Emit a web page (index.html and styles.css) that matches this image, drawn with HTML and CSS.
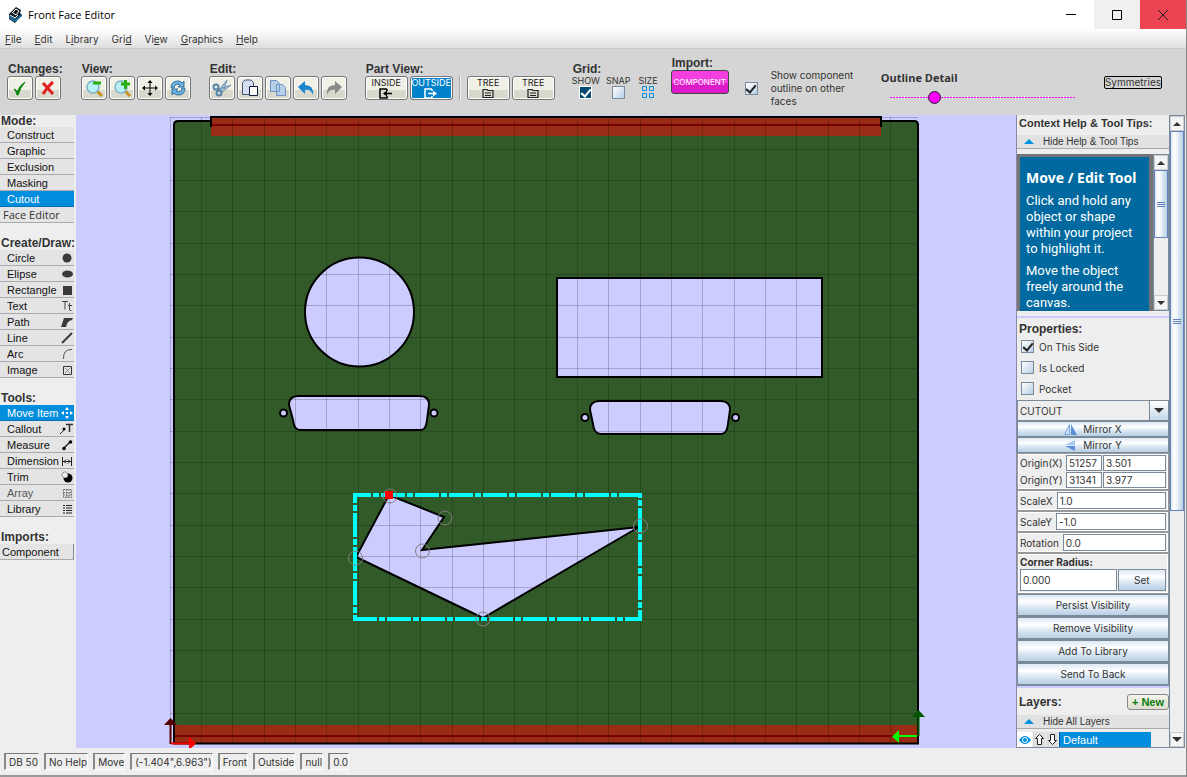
FILE: index.html
```html
<!DOCTYPE html>
<html lang="en">
<head>
<meta charset="utf-8">
<title>Front Face Editor</title>
<link rel="stylesheet" href="styles.css">
</head>
<body>
<div class="window">
<header class="titlebar">
  <svg class="app-logo" width="15" height="16" viewBox="0 0 15 16"><path d="M1 7 8 0l5 3-1 3 2 2-7 8-6-4z" fill="#101820"/><path d="M4 6l4-4 3 2-3 4" fill="none" stroke="#fff"/><path d="M1 8l6 4 7-5v2l-7 6-6-4z" fill="#1b6d9c"/><path d="M2 8l5 3 3-3M5 6l3 2" fill="none" stroke="#fff"/></svg>
  <h1 class="title">Front Face Editor</h1>
  <div class="window-controls">
    <button class="wc" aria-label="Minimize"><svg width="10" height="10"><path d="M0 4.500h10" stroke="#000"/></svg></button>
    <button class="wc wc-max" aria-label="Maximize"><svg width="10" height="10"><path d="M.5.5h9v9h-9z" stroke="#000" fill="none"/></svg></button>
    <button class="wc wc-close" aria-label="Close"><svg width="10" height="10"><path d="M0 0l10 10M10 0L0 10" stroke="#222"/></svg></button>
  </div>
</header>
<nav class="menubar">
  <a href="#"><u>F</u>ile</a><a href="#"><u>E</u>dit</a><a href="#">L<u>i</u>brary</a><a href="#">Gri<u>d</u></a><a href="#">Vi<u>e</u>w</a><a href="#"><u>G</u>raphics</a><a href="#"><u>H</u>elp</a>
</nav>
<div class="toolbar">
  <section class="group g-changes"><h2>Changes:</h2><div class="btns">
    <button class="tb" aria-label="Accept"><svg width="16" height="16" viewBox="0 0 16 16"><path d="M2 9q2 0 3 3Q8 5 13 2 8 8 6 15H5Q4 11 2 9z" fill="#0c840c" stroke="#0c840c"/></svg></button>
    <button class="tb" aria-label="Reject"><svg width="16" height="16" viewBox="0 0 16 16"><path d="M3 3l10 11M13 2Q7 7 3 14" stroke="#e02020" stroke-width="3" fill="none"/></svg></button>
  </div></section>
  <section class="group g-view"><h2>View:</h2><div class="btns">
    <button class="tb" aria-label="Zoom out"><svg width="20" height="20" viewBox="0 0 20 20"><path d="M13 13l5 5" stroke="#c89020" stroke-width="3"/><circle cx="9" cy="9" r="6" fill="#b8f0f4" stroke="#7db4c8" stroke-width="1.500"/><path d="M9 5h8" stroke="#29b010" stroke-width="3"/></svg></button>
    <button class="tb" aria-label="Zoom in"><svg width="20" height="20" viewBox="0 0 20 20"><path d="M13 13l5 5" stroke="#c89020" stroke-width="3"/><circle cx="9" cy="9" r="6" fill="#b8f0f4" stroke="#7db4c8" stroke-width="1.500"/><path d="M9 6h9M13.500 2v9" stroke="#29b010" stroke-width="3"/></svg></button>
    <button class="tb" aria-label="Pan"><svg width="16" height="16" viewBox="0 0 16 16"><path d="M8 2v12M2 8h12" stroke="#000"/><path d="M8 0l2.500 3h-5zM8 16l2.500-3h-5zM0 8l3-2.500v5zM16 8l-3-2.500v5z"/></svg></button>
    <button class="tb" aria-label="Refresh"><svg width="18" height="18" viewBox="0 0 18 18"><path d="M2 9Q2 2 9 2q3 0 4 2l2-2v6H9l2-2Q8 4 6 6L5 9zM16 9q0 7-7 7-3 0-4-2l-2 2v-6h6l-2 2q3 2 5 0l1-3z" fill="#6bb4e4" stroke="#35709c"/></svg></button>
  </div></section>
  <section class="group g-edit"><h2>Edit:</h2><div class="btns">
    <button class="tb" aria-label="Cut"><svg width="20" height="18" viewBox="0 0 20 18"><path d="M7 11L15 1l-3 9M7 10l12-4-9 7" fill="#9fc0d8" stroke="#6d93b0"/><circle cx="4" cy="8" r="2.500" fill="none" stroke="#5484a8" stroke-width="2"/><circle cx="7" cy="14" r="2.500" fill="none" stroke="#5484a8" stroke-width="2"/></svg></button>
    <button class="tb" aria-label="Paste"><svg width="18" height="18" viewBox="0 0 18 18"><path d="M1.500 3.500L4 1h6l2.500 2.500v12h-11z" fill="#d4def0" stroke="#4a5878"/><path d="M8.500 7.500h8v9h-8z" fill="#fff" stroke="#102040" stroke-width="1"/></svg></button>
    <button class="tb" aria-label="Copy"><svg width="18" height="18" viewBox="0 0 18 18"><path d="M1.500 1.500h6l3 3v8h-9zM7.500 5.500h6l3 3v8h-9z" fill="#b8cfea" stroke="#6f93c4"/></svg></button>
    <button class="tb" aria-label="Undo"><svg width="18" height="14" viewBox="0 0 18 14"><path d="M1 6l7-6v4q9 0 8 10-2-6-8-5v4z" fill="#1a86d0"/></svg></button>
    <button class="tb" aria-label="Redo"><svg width="18" height="14" viewBox="0 0 18 14"><path d="M17 6l-7-6v4q-9 0-8 10 2-6 8-5v4z" fill="#8a8a8a"/></svg></button>
  </div></section>
  <section class="group g-part"><h2>Part View:</h2><div class="btns">
    <button class="tb wide">INSIDE<svg width="14" height="11" viewBox="0 0 14 11"><path d="M8 1H1v9h7V8M8 1v2M13 5.500H5" fill="none" stroke="#000" stroke-width="1.500"/><path d="M4 5.500l4-3v6z"/></svg></button>
    <button class="tb wide on">OUTSIDE<svg width="14" height="11" viewBox="0 0 14 11"><path d="M8 1H1v9h7V8M8 1v2M4 5.500h7" fill="none" stroke="#fff" stroke-width="1.500"/><path d="M13 5.500l-4-3v6z" fill="#fff"/></svg></button>
    <span class="sep"></span>
    <button class="tb wide">TREE<svg width="12" height="11" viewBox="0 0 12 11"><path d="M1 9.500v-8h4l1 1h5v7zM3 5h6M3 7.500h6" fill="none" stroke="#222" stroke-width="1.200"/></svg></button>
    <button class="tb wide">TREE<svg width="12" height="11" viewBox="0 0 12 11"><path d="M1 9.500v-8h4l1 1h5v7zM3 5h6M3 7.500h6" fill="none" stroke="#222" stroke-width="1.200"/></svg></button>
  </div></section>
  <section class="group g-grid"><h2>Grid:</h2><div class="grid-opts">
    <label>SHOW<input type="checkbox" class="check dark" checked></label>
    <label>SNAP<input type="checkbox" class="check"></label>
    <button class="size">SIZE<svg width="12" height="12"><path d="M.5.5h4v4h-4zM7.500.5h4v4h-4zM.5 7.500h4v4h-4zM7.500 7.500h4v4h-4z" fill="none" stroke="#0090e0"/></svg></button>
  </div></section>
  <section class="group g-import"><h2>Import:</h2><button class="component">COMPONENT</button></section>
  <label class="outline-opt"><input type="checkbox" class="check" checked><span>Show component outline on other faces</span></label>
  <label class="detail"><span>Outline Detail</span><input type="range" min="0" max="100" value="22"></label>
  <button class="symm">Symmetries</button>
</div>
<main class="main">
<aside class="side">
  <section><h2>Mode:</h2>
    <button class="row">Construct</button><button class="row">Graphic</button><button class="row">Exclusion</button><button class="row">Masking</button><button class="row on">Cutout</button><button class="row plain">Face Editor</button></section>
  <section><h2>Create/Draw:</h2>
    <button class="row">Circle<svg width="12" height="12"><circle cx="6" cy="6" r="4.500" fill="#3a3a3a"/></svg></button>
    <button class="row">Elipse<svg width="12" height="12"><ellipse cx="6.500" cy="6" rx="5.500" ry="3.500" fill="#3a3a3a"/></svg></button>
    <button class="row">Rectangle<svg width="12" height="12"><path d="M2 2h9v9H2z" fill="#3a3a3a"/></svg></button>
    <button class="row">Text<svg width="12" height="12"><path d="M1 1.500h6M4 1.500v8M7 5.500h4M8.500 3v7q0 .5 2 .5" fill="none" stroke="#444"/></svg></button>
    <button class="row">Path<svg width="12" height="12"><path d="M0 11l3-9h9l-1 2Q6 5 5 11z" fill="#3a3a3a"/></svg></button>
    <button class="row">Line<svg width="12" height="12"><path d="M1 11L11 1" stroke="#3a3a3a" stroke-width="2"/></svg></button>
    <button class="row">Arc<svg width="12" height="12"><path d="M2.500 11Q2 1 11 1.500" fill="none" stroke="#555"/></svg></button>
    <button class="row">Image<svg width="12" height="12"><path d="M2.500 2.500h8v8h-8z" fill="none" stroke="#333"/><path d="M4 4l5 5M9 4L4 9" stroke="#888"/></svg></button></section>
  <section><h2>Tools:</h2>
    <button class="row on">Move Item<svg width="12" height="12"><path d="M6 0l2 3H4zM6 12l2-3H4zM0 6l3-2v4zM12 6L9 4v4zM5 5h2v2H5z" fill="#fff"/></svg></button>
    <button class="row">Callout<svg width="14" height="12"><path d="M1 11l5-5" stroke="#222"/><circle cx="5" cy="6" r="1.500"/><path d="M7 1.500h7M10.500 1v8" stroke="#333" stroke-width="1.500"/></svg></button>
    <button class="row">Measure<svg width="12" height="12"><path d="M3 9l6-6" stroke="#222" stroke-width="1.500"/><circle cx="3" cy="9.500" r="1.800"/><circle cx="9.500" cy="3" r="1.800"/></svg></button>
    <button class="row">Dimension<svg width="12" height="12"><path d="M1.500 2v9M10.500 2v9M2 6.500h8M5 4.500l-2 2 2 2M7 4.500l2 2-2 2" fill="none" stroke="#222"/></svg></button>
    <button class="row">Trim<svg width="12" height="12"><circle cx="7" cy="7" r="4.500"/><circle cx="4" cy="4" r="3" fill="#e8e8e8" stroke="#333" stroke-dasharray="1 1"/></svg></button>
    <button class="row dim">Array<svg width="12" height="12"><path d="M2.500 2.500h8v8h-8zM2 5.500h9M2 8h9M5.500 2v9M8 2v9" fill="none" stroke="#777" stroke-dasharray="2 1"/></svg></button>
    <button class="row">Library<svg width="12" height="12"><path d="M2 2.500h2M2 5h2M2 7.500h2M2 10h2M5 2.500h6M5 5h6M5 7.500h6M5 10h6" stroke="#222"/></svg></button></section>
  <section><h2>Imports:</h2><button class="row comp">Component</button></section>
</aside>
<div class="canvas">
<svg class="drawing" viewBox="76 115 940 633" preserveAspectRatio="xMinYMin meet" role="img" aria-label="Front face drawing">
  <path d="M174 744V125q0-4 4-4h33v-4h670v4h33q4 0 4 4v619z" fill="#315a28"/>
  <path d="M211 118h670v18H211zM174 725h744v18H174z" fill="#982c14"/>
  <path d="M211 125h670M174 736h744" stroke="#7a0000" stroke-width="2"/>
  <path d="M174 744V125q0-4 4-4h33M881 121h33q4 0 4 4v619" fill="none" stroke="#000" stroke-width="2"/>
  <path d="M173 743.500h746M210 117h672" stroke="#000" stroke-width="2"/>
  <path d="M211 117v10M881 117v10" stroke="#000" stroke-width="2"/>
  <g fill="#ccf" stroke="#000" stroke-width="2">
    <circle cx="359.500" cy="312" r="54.500"/>
    <path d="M557 278h265v99H557z"/>
    <path d="M298 396h122q9 0 9 9l-2 15q-1 10-6 10H300q-6 0-7-10l-4-15q0-9 9-9z"/>
    <path d="M599 401h122q9 0 9 9l-2 14q-1 10-7 10H601q-7 0-8-10l-3-14q0-9 9-9z"/>
    <circle cx="283.500" cy="413" r="3.500"/><circle cx="434" cy="413" r="3.500"/>
    <circle cx="585" cy="417.500" r="3.500"/><circle cx="735.500" cy="417.500" r="3.500"/>
    <path d="M389 495l55 22-22 33 217-23-156 91-127-61z"/>
  </g>
  <path stroke="#000" stroke-opacity=".2" fill="none" d="M170.500 117v627M201.500 117v627M232.500 117v627M264.500 117v627M295.500 117v627M326.500 117v627M358.500 117v627M389.500 117v627M420.500 117v627M452.500 117v627M483.500 117v627M514.500 117v627M546.500 117v627M577.500 117v627M608.500 117v627M640.500 117v627M671.500 117v627M702.500 117v627M734.500 117v627M765.500 117v627M796.500 117v627M828.500 117v627M859.500 117v627M890.500 117v627M170 117.500h748M170 149.500h748M170 180.500h748M170 211.500h748M170 243.500h748M170 274.500h748M170 305.500h748M170 337.500h748M170 368.500h748M170 399.500h748M170 431.500h748M170 462.500h748M170 493.500h748M170 525.500h748M170 556.500h748M170 587.500h748M170 619.500h748M170 650.500h748M170 681.500h748M170 713.500h748"/>
  <g stroke="#0ff" stroke-width="4" stroke-dasharray="24 2 6 2">
    <path d="M353 495h289" stroke-dashoffset="6"/><path d="M355 493v128" stroke-dashoffset="14"/>
    <path d="M640 493v128" stroke-dashoffset="19"/><path d="M353 619h289"/>
  </g>
  <g fill="none" stroke="#808080"><circle cx="390" cy="496" r="7"/><circle cx="445" cy="518" r="7"/><circle cx="422.500" cy="551" r="7"/><circle cx="640.500" cy="526" r="7"/><circle cx="483" cy="619" r="7"/><circle cx="355.500" cy="558" r="7"/></g>
  <path d="M385 491h8v8h-8z" fill="red"/>
  <path d="M170.500 744v-20" stroke="#500" stroke-width="2"/><path d="M164 725l6.500-7 6.500 7z" fill="#500"/>
  <path d="M171 743.500h19" stroke="red" stroke-width="2"/><path d="M189 737v13l7-6.500z" fill="red"/>
  <path d="M918.500 736v-20" stroke="#050" stroke-width="2"/><path d="M912 717l6.500-7 6.500 7z" fill="#050"/>
  <path d="M917 736h-19" stroke="#0f0" stroke-width="2"/><path d="M899 730v13l-7-6.500z" fill="#0f0"/>
</svg>
</div>
<aside class="panel">
<div class="content">
  <section class="help">
    <h2>Context Help &amp; Tool Tips:</h2>
    <button class="toggle"><svg width="10" height="5"><path d="M5 0l5 5H0z" fill="#0090e0"/></svg>Hide Help &amp; Tool Tips</button>
    <div class="help-box">
      <div class="tip"><h3>Move / Edit Tool</h3><p>Click and hold any object or shape within your project to highlight it.</p><p>Move the object freely around the canvas.</p></div>
      <div class="scroll inner"><button aria-label="Scroll up"><svg width="8" height="4"><path d="M4 0l4 4H0z" fill="#333"/></svg></button><div class="thumb"></div><div class="track"></div><button aria-label="Scroll down"><svg width="8" height="4"><path d="M0 0h8L4 4z" fill="#333"/></svg></button></div>
    </div>
  </section>
  <section class="props">
    <h2>Properties:</h2>
    <label class="opt"><input type="checkbox" class="check" checked>On This Side</label>
    <label class="opt"><input type="checkbox" class="check">Is Locked</label>
    <label class="opt"><input type="checkbox" class="check">Pocket</label>
    <div class="combo"><select aria-label="Type"><option>CUTOUT</option></select><span class="arrow"><svg width="10" height="5"><path d="M0 0h10L5 5z" fill="#333"/></svg></span></div>
    <button class="metal mirror"><svg width="13" height="11"><path d="M5.500.5v10h-5z" fill="#c8defa" stroke="#7aa7e0"/><path d="M7 0v11h6z" fill="#5b8fd8"/></svg>Mirror X</button>
    <button class="metal mirror"><svg width="13" height="11"><path d="M11 0v5H1z" fill="#a8c8f4"/><path d="M11 6v5L1 6z" fill="#5b8fd8"/></svg>Mirror Y</button>
    <div class="field origin">
      <label for="ox">Origin(X)</label><input id="ox" value="51257"><input aria-label="Origin X inches" value="3.501">
      <label for="oy">Origin(Y)</label><input id="oy" value="31341"><input aria-label="Origin Y inches" value="3.977">
    </div>
    <div class="field"><label for="sx">ScaleX</label><input id="sx" value="1.0"></div>
    <div class="field"><label for="sy">ScaleY</label><input id="sy" value="-1.0"></div>
    <div class="field"><label for="rot">Rotation</label><input id="rot" value="0.0"></div>
    <div class="field corner"><label for="cr">Corner Radius:</label><div><input id="cr" value="0.000"><button class="metal">Set</button></div></div>
    <button class="metal big">Persist Visibility</button><button class="metal big">Remove Visibility</button><button class="metal big">Add To Library</button><button class="metal big">Send To Back</button>
  </section>
  <section class="layers">
    <div class="layers-head"><h2>Layers:</h2><button class="new">+ New</button></div>
    <button class="toggle"><svg width="10" height="5"><path d="M5 0l5 5H0z" fill="#0090e0"/></svg>Hide All Layers</button>
    <div class="layer"><button class="eye" aria-label="Visible"><svg width="12" height="10"><path d="M0 5q6-8 12 0-6 8-12 0z" fill="#0090e0"/><circle cx="6" cy="5" r="2.500" fill="#0090e0" stroke="#fff"/></svg></button><button aria-label="Move up"><svg width="9" height="11"><path d="M4.500.5l4 4h-2v6h-4v-6h-2z" fill="#fff" stroke="#222"/></svg></button><button aria-label="Move down"><svg width="9" height="11"><path d="M4.500 10.500l4-4h-2v-6h-4v6h-2z" fill="#fff" stroke="#222"/></svg></button><input aria-label="Layer name" value="Default"></div>
  </section>
</div>
<div class="scroll outer"><button aria-label="Scroll up"><svg width="8" height="4"><path d="M4 0l4 4H0z" fill="#333"/></svg></button><div class="thumb"></div><div class="track"></div><button aria-label="Scroll down"><svg width="10" height="5"><path d="M0 0h10L5 5z" fill="#333"/></svg></button></div>
</aside>
</main>
<footer class="status"><span>DB 50</span><span>No Help</span><span>Move</span><span>(-1.404",6.963")</span><span>Front</span><span>Outside</span><span>null</span><span>0.0</span></footer>
</div>
</body>
</html>
```
FILE: styles.css
```css
* { box-sizing: border-box; margin: 0; padding: 0; }
body { background: #eee; color: #333; font: 11px/14px "Liberation Sans", Arial, sans-serif; }
button, input, select { font: inherit; color: inherit; border: 0; border-radius: 0; background: none; min-width: 0; }
a { color: inherit; text-decoration: none; }
svg { display: block; flex: none; }
h2 { font: bold 12px/14px "Liberation Sans", Arial, sans-serif; white-space: nowrap; }
.window { display: flex; flex-direction: column; height: 100vh; border-right: 1px solid #888; }

.titlebar { display: flex; align-items: center; height: 29px; background: #fff; padding-left: 8px; color: #000; flex: none; }
.title { font: 11px/16px "Open Sans", sans-serif; margin-left: 5px; flex: 1; }
.window-controls { display: flex; }
.wc { width: 46px; height: 29px; display: flex; align-items: center; justify-content: center; }
.wc-max { background: #f0f0f0; }
.wc-close { background: #ee4452; }

.menubar { display: flex; gap: 13px; align-items: center; height: 20px; flex: none; padding-left: 5px; background: linear-gradient(#fff, #dedede); border-bottom: 1px solid #c8c8c8; font: 10px/14px Inter, sans-serif; }

.toolbar { display: flex; align-items: flex-start; flex: none; height: 66px; padding: 13px 24px 0 7px; background: #d5d5d5; white-space: nowrap; }
.group h2 { padding-left: 1px; }
.btns { display: flex; gap: 2px; }
.g-view, .g-edit { margin-left: 18px; }
.g-part { margin-left: 18px; }
.tb { width: 26px; height: 24px; display: flex; align-items: center; justify-content: center; border: 1px solid #777; border-radius: 3px; background: linear-gradient(#f0f0e6 0 58%, #d8d8cc 58%); box-shadow: inset 0 0 0 1px #fff; }
.tb.wide { width: 43px; flex-direction: column; font: 9px/10px Inter, sans-serif; color: #222; }
.tb.on { color: #fff; background: #0081cc; border-color: #777; }
.sep { width: 2px; background: #aaa; margin: 0 4px; border-right: 1px solid #eee; }
.grid-opts { display: flex; gap: 6px; font: 9px/10px Inter, sans-serif; }
.g-grid { margin-left: 17px; }
.grid-opts label, .size { display: flex; flex-direction: column; align-items: center; }
.size { margin-left: 2px; }
.check { appearance: none; width: 13px; height: 13px; flex: none; border: 1px solid #7a8a99; background: linear-gradient(135deg, #fff, #b8cfe5); display: grid; place-items: center; }
.check:checked::after { content: ""; width: 4px; height: 8px; border: solid #222; border-width: 0 2px 2px 0; transform: rotate(40deg); margin-bottom: 2px; }
.check.dark { background: #034a73; border-color: #fff; }
.check.dark:checked::after { border-color: #fff; }
.g-import { margin: -6px 0 0 13px; }
.component { width: 58px; height: 24px; border: 1px solid #444; border-radius: 3px; background: linear-gradient(#f33ee0 0 55%, #dc1cc8 55%); color: #fff; font: 8px/10px Inter, sans-serif; }
.outline-opt { display: flex; align-items: center; gap: 13px; margin: 7px 24px 0 16px; width: 112px; white-space: normal; font: 10px/13px Inter, sans-serif; }
.detail { display: flex; flex-direction: column; width: 194px; margin-top: 8px; }
.detail span { font: bold 11px/16px "Open Sans", sans-serif; }
.detail input { appearance: none; height: 15px; margin: 4px 0 0 9px; }
.detail input::-webkit-slider-runnable-track { height: 13px; background: repeating-linear-gradient(90deg, #f0f 0 2px, #d5d5d5 2px 3px) center / 100% 1px no-repeat; }
.detail input::-webkit-slider-thumb { appearance: none; width: 13px; height: 13px; border-radius: 50%; background: #f0f; border: 1px solid #222; }
.symm { margin: 14px 0 0 auto; height: 13px; border: 1px solid #000; border-radius: 2px; font: 10px/11px Inter, sans-serif; }

.main { flex: 1; display: flex; min-height: 0; }
.side { width: 76px; flex: none; padding-right: 2px; display: flex; flex-direction: column; gap: 13px; }
.side h2 { height: 14px; line-height: 15px; padding-left: 1px; }
.side section:first-child h2 { height: 12px; line-height: 13px; }
.row { width: 74px; height: 16px; padding: 0 1px 0 7px; display: flex; align-items: center; justify-content: space-between; color: #111; background: #e4e4e4; border-bottom: 1px solid #aaa; line-height: 14px; white-space: nowrap; }
.row.on { background: #008ddd; color: #fff; border-bottom-color: #0073b8; }
.row.plain { padding-left: 3px; font: 11px/14px "Open Sans", sans-serif; color: #333; }
.row.dim { color: #555; }
.row.comp { padding-left: 2px; border-right: 1px solid #7a8a99; }

.canvas { flex: 1; min-width: 0; background: #ccf; overflow: hidden; }
.drawing { width: 100%; height: 100%; }

.panel { width: 170px; flex: none; display: flex; border-left: 1px solid #8a8aa8; overflow: hidden; }
.content { width: 152px; flex: none; overflow: hidden; border-bottom: 1px solid #7a8a99; }
.content > section > h2, .layers-head h2 { padding-left: 2px; }
.help > h2 { font-size: 11px; }
.toggle { display: flex; align-items: center; width: 100%; height: 14px; gap: 9px; padding-left: 7px; background: #e2e2e2; border-bottom: 1px solid #aaa; font-size: 10px; }
.help { height: 203px; padding-top: 1px; border-bottom: 2px solid #ccf; }
.help .toggle { margin: 5px 0; }
.help-box { display: flex; height: 157px; }
.tip { width: 136px; background: #006aa0; color: #fff; border: solid #757575; border-width: 3px 4px 0 3px; padding: 13px 4px 0 6px; font: 13px/16px Roboto, sans-serif; overflow: hidden; }
.tip h3 { font: bold 14px/16px "Noto Sans", sans-serif; margin-bottom: 7px; white-space: nowrap; }
.tip p { margin-bottom: 6px; }
.scroll { display: flex; flex-direction: column; width: 16px; border: 1px solid #7a8a99; }
.scroll button { height: 15px; flex: none; display: flex; align-items: center; justify-content: center; background: #f4f4f4; border: 1px solid #ccc; }
.thumb { flex: none; height: 68px; border: 1px solid #6382bf; background: repeating-linear-gradient(#6382bf 0 1px, transparent 1px 2px) center / 8px 5px no-repeat, linear-gradient(90deg, #dfe9f3, #fff 30%, #b8cfe5); }
.outer .thumb { height: 380px; }
.track { flex: 1; }
.props { padding-top: 4px; border-bottom: 2px solid #ccf; }
.opt { display: flex; align-items: center; gap: 5px; height: 21px; padding-left: 4px; font: 10px/14px Inter, sans-serif; }
.combo { display: flex; height: 21px; margin-top: 1px; border: 1px solid #7a8a99; }
.combo select { appearance: none; flex: 1; padding-left: 2px; font: 10px/18px Inter, sans-serif; }
.arrow { width: 19px; display: grid; place-items: center; border-left: 1px solid #7a8a99; background: linear-gradient(#fff, #c5d8ea); }
.metal { border: 1px solid #7a8a99; background: linear-gradient(#dde8f3, #fff 35%, #dde8f3 60%, #b8cfe5); display: flex; align-items: center; justify-content: center; font: 10px/14px Inter, sans-serif; width: 100%; }
.mirror { height: 16px; gap: 6px; }
.big { height: 23px; border-width: 1px 1px 2px; }
.field { display: flex; align-items: center; gap: 4px; height: 21px; padding: 1px 2px; border: 1px solid #999; box-shadow: inset 0 0 0 1px #fff; font: 10px/14px Inter, sans-serif; }
.field input { flex: 1; width: 20px; height: 17px; border: 1px solid #7a8a99; background: #fff; padding-left: 2px; }
.field.origin { display: grid; grid-template-columns: 45px 36px 1fr; gap: 1px; height: 37px; }
.origin input { width: 100%; height: 16px; }
.field.corner { display: block; height: 41px; }
.corner label { display: block; line-height: 14px; font-weight: bold; }
.corner div { display: flex; gap: 1px; }
.corner input { flex: 2; height: 22px; }
.corner .metal { flex: 1; height: 22px; }
.layers-head { display: flex; align-items: center; justify-content: space-between; height: 27px; }
.new { width: 42px; height: 16px; border: 1px solid #888; border-radius: 3px; background: linear-gradient(#f4f4ea, #dcdccf); color: #0a7a0a; font-weight: bold; }
.layer { display: flex; gap: 1px; height: 15px; margin-top: 3px; }
.layer button { width: 12px; display: flex; align-items: center; justify-content: center; background: #ddd; }
.layer .eye { width: 15px; background: #fff; }
.layer input { width: 92px; background: #008ddd; color: #fff; padding-left: 3px; border-left: 1px solid #05a; }

.status { display: flex; flex: none; gap: 5px; height: 29px; padding: 5px 4px; border-bottom: 2px solid #999; font: 10px/14px Inter, sans-serif; }
.status span { height: 17px; padding: 1px 0 0 3px; border: 1px solid #fff; border-top: 1px solid #777; border-left: 2px solid #888; white-space: nowrap; }
```
